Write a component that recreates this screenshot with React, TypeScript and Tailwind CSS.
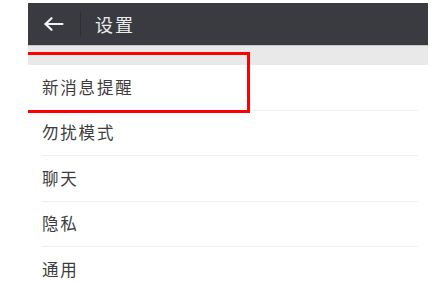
const items = ['新消息提醒', '勿扰模式', '聊天', '隐私', '通用'];

function BackArrow() {
  return (
    <svg width="20" height="14" viewBox="0 0 20 14" fill="none" stroke="#f2f2f2" strokeWidth="2.2" strokeLinecap="round" strokeLinejoin="round">
      <path d="M1.5 7h17" />
      <path d="M7.5 1.2L1.5 7l6 5.8" />
    </svg>
  );
}

export default function App() {
  return (
    <div
      className="relative w-[438px] h-[283px] overflow-hidden bg-white"
      style={{ fontFamily: '"Noto Sans CJK SC", "Noto Sans", sans-serif' }}
    >
      <div className="ml-[28px] mr-[10px] pt-[3px]">
        <header className="h-[42px] bg-[#3a3b40] flex items-center">
          <button className="ml-[16px] flex items-center">
            <BackArrow />
          </button>
          <div className="ml-[16px] w-px h-[24px] bg-[#2e2f33]" />
          <span className="ml-[14px] text-[18px] tracking-[2px] text-[#ececec]">设置</span>
        </header>
        <div className="h-px bg-[#c9c9c9]" />
        <div className="h-[19px] bg-[#e9e9e9]" />
        <ul className="pl-[14px] pr-[10px]">
          {items.map((t) => (
            <li
              key={t}
              className="h-[45.5px] flex items-center border-b border-[#efefef] text-[16.5px] tracking-[1.8px] text-[#3d3d3d]"
            >
              {t}
            </li>
          ))}
        </ul>
      </div>
      <div className="absolute left-[28px] top-[52px] w-[222px] h-[61px] border-[3px] border-l-0 border-[#ff0000]" />
    </div>
  );
}
